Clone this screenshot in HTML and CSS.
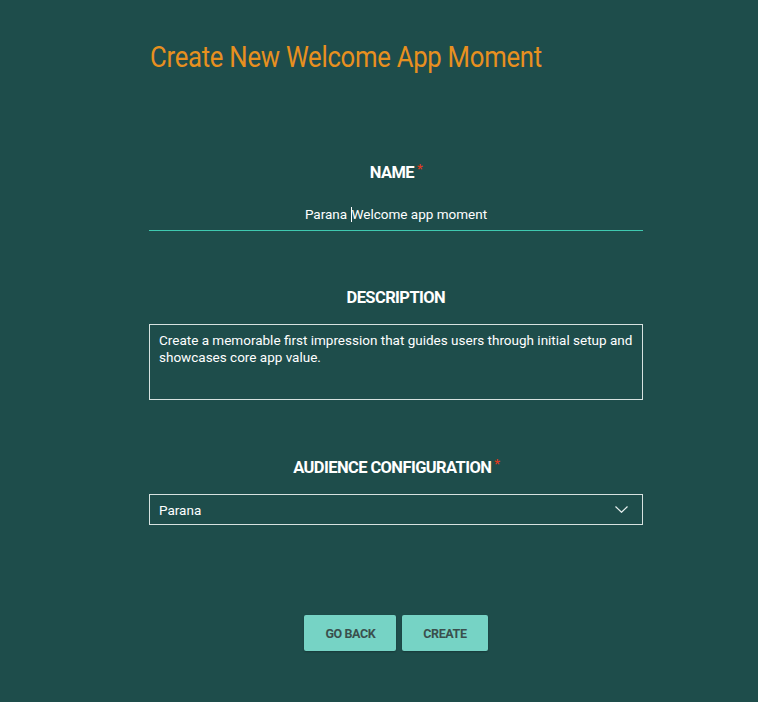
FILE: index.html
```html
<!DOCTYPE html>
<html>
<head>
<meta charset="utf-8">
<link rel="stylesheet" href="styles.css">
</head>
<body>
<main class="page">
  <h1 class="title">Create New Welcome App Moment</h1>
  <form class="form">
    <div class="field field-name">
      <label class="label">NAME<span class="req">*</span></label>
      <div class="text-input"><span>Parana </span><span class="caret"></span><span>Welcome app moment</span></div>
    </div>
    <div class="field field-desc">
      <label class="label">DESCRIPTION</label>
      <div class="textarea">Create a memorable first impression that guides users through initial setup and showcases core app value.</div>
    </div>
    <div class="field field-aud">
      <label class="label">AUDIENCE CONFIGURATION<span class="req">*</span></label>
      <div class="select">
        <span>Parana</span>
        <svg class="chev" width="13" height="7" viewBox="0 0 13 7"><path d="M0.5 0.5 L6.5 6.3 L12.5 0.5" fill="none" stroke="#e8f0ef" stroke-width="1.2"/></svg>
      </div>
    </div>
    <div class="actions">
      <button type="button" class="btn">GO BACK</button>
      <button type="button" class="btn">CREATE</button>
    </div>
  </form>
</main>
</body>
</html>
```
FILE: styles.css
```css
html, body {
  margin: 0;
  padding: 0;
  background: #1e4d4b;
  height: 100%;
}
body {
  font-family: Roboto, "Liberation Sans", sans-serif;
  color: #ffffff;
}
.page {
  width: 494px;
  margin: 0 0 0 149px;
  padding-top: 40px;
}
.title {
  display: inline-block;
  margin: 0 0 0 1px;
  font-weight: 400;
  font-size: 29px;
  line-height: 34px;
  color: #e8901f;
  letter-spacing: -0.3px;
  white-space: nowrap;
  transform: scaleX(0.886);
  transform-origin: left center;
}
.form {
  display: flex;
  flex-direction: column;
}
.field {
  display: flex;
  flex-direction: column;
  align-items: center;
}
.label {
  display: inline-block;
  font-weight: 700;
  font-size: 17px;
  line-height: 20px;
  letter-spacing: -0.6px;
  color: #ffffff;
  transform: translateY(-1px) scaleX(0.97);
}
.req {
  color: #e0391d;
  font-size: 13px;
  vertical-align: top;
  margin-left: 3px;
  position: relative;
  top: -3px;
}
.field-name {
  margin-top: 89px;
}
.text-input {
  margin-top: 23px;
  width: 100%;
  text-align: center;
  font-size: 13.5px;
  line-height: 16px;
  padding-bottom: 8px;
  border-bottom: 1px solid #3fc9b0;
}
.caret {
  display: inline-block;
  width: 1px;
  height: 15px;
  background: #ffffff;
  vertical-align: -3px;
}
.field-desc {
  margin-top: 57px;
}
.textarea {
  margin-top: 16px;
  box-sizing: border-box;
  width: 100%;
  height: 76px;
  border: 1px solid #d7e2e0;
  padding: 7px 9px;
  font-size: 13.5px;
  line-height: 17px;
  text-align: left;
}
.field-aud {
  margin-top: 58px;
}
.select {
  margin-top: 16px;
  box-sizing: border-box;
  width: 100%;
  height: 31px;
  border: 1px solid #d7e2e0;
  padding: 0 14px 0 9px;
  display: flex;
  align-items: center;
  justify-content: space-between;
  font-size: 13.5px;
}
.actions {
  margin-top: 90px;
  display: flex;
  justify-content: center;
  gap: 6px;
}
.btn {
  height: 36px;
  padding: 0 21px;
  background: #76d3c5;
  border: none;
  border-radius: 2px;
  font-family: Roboto, "Liberation Sans", sans-serif;
  font-weight: 700;
  font-size: 12.5px;
  letter-spacing: -0.4px;
  line-height: 38px;
  color: #3a4f4d;
  box-shadow: 0 1px 2px rgba(0,0,0,0.25);
}
```
